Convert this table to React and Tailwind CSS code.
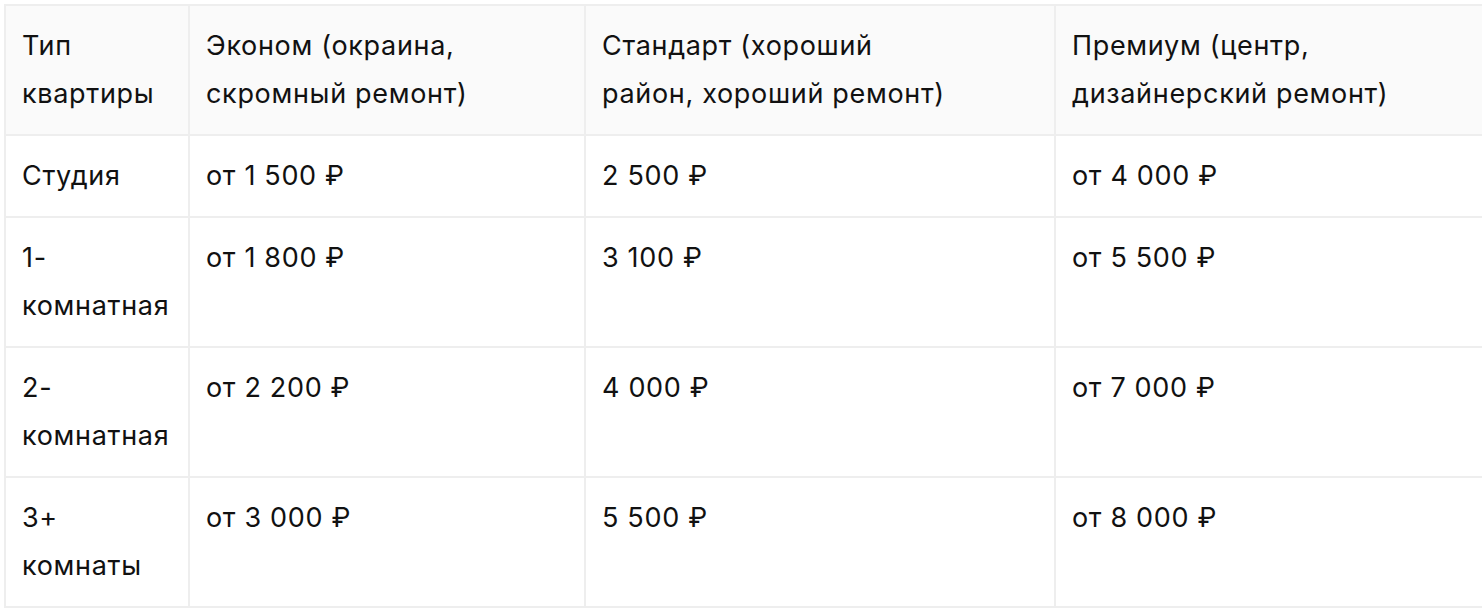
const rows = [
  ["Студия", "от 1 500 ₽", "2 500 ₽", "от 4 000 ₽"],
  ["1-комнатная", "от 1 800 ₽", "3 100 ₽", "от 5 500 ₽"],
  ["2-комнатная", "от 2 200 ₽", "4 000 ₽", "от 7 000 ₽"],
  ["3+ комнаты", "от 3 000 ₽", "5 500 ₽", "от 8 000 ₽"],
];

const heads = [
  "Тип квартиры",
  "Эконом (окраина, скромный ремонт)",
  "Стандарт (хороший район, хороший ремонт)",
  "Премиум (центр, дизайнерский ремонт)",
];

export default function App() {
  return (
    <div className="w-[1482px] h-[610px] overflow-hidden bg-white pl-[4px] pt-[4px] font-['Inter',sans-serif] text-[27px] tracking-[0.025em] leading-[48px] text-[#111111]">
      <table className="table-fixed border-collapse w-[1500px]">
        <colgroup>
          <col className="w-[184px]" />
          <col className="w-[396px]" />
          <col className="w-[470px]" />
          <col className="w-[450px]" />
        </colgroup>
        <thead>
          <tr className="bg-[#fafafa]">
            {heads.map((h) => (
              <th key={h} className="border-2 border-[#eeeeee] px-4 py-4 text-left font-normal align-top">
                <div className="max-w-[355px]">{h}</div>
              </th>
            ))}
          </tr>
        </thead>
        <tbody>
          {rows.map((r) => (
            <tr key={r[0]}>
              {r.map((c, i) => (
                <td key={i} className="border-2 border-[#eeeeee] px-4 py-4 align-top">
                  {c}
                </td>
              ))}
            </tr>
          ))}
        </tbody>
      </table>
    </div>
  );
}
